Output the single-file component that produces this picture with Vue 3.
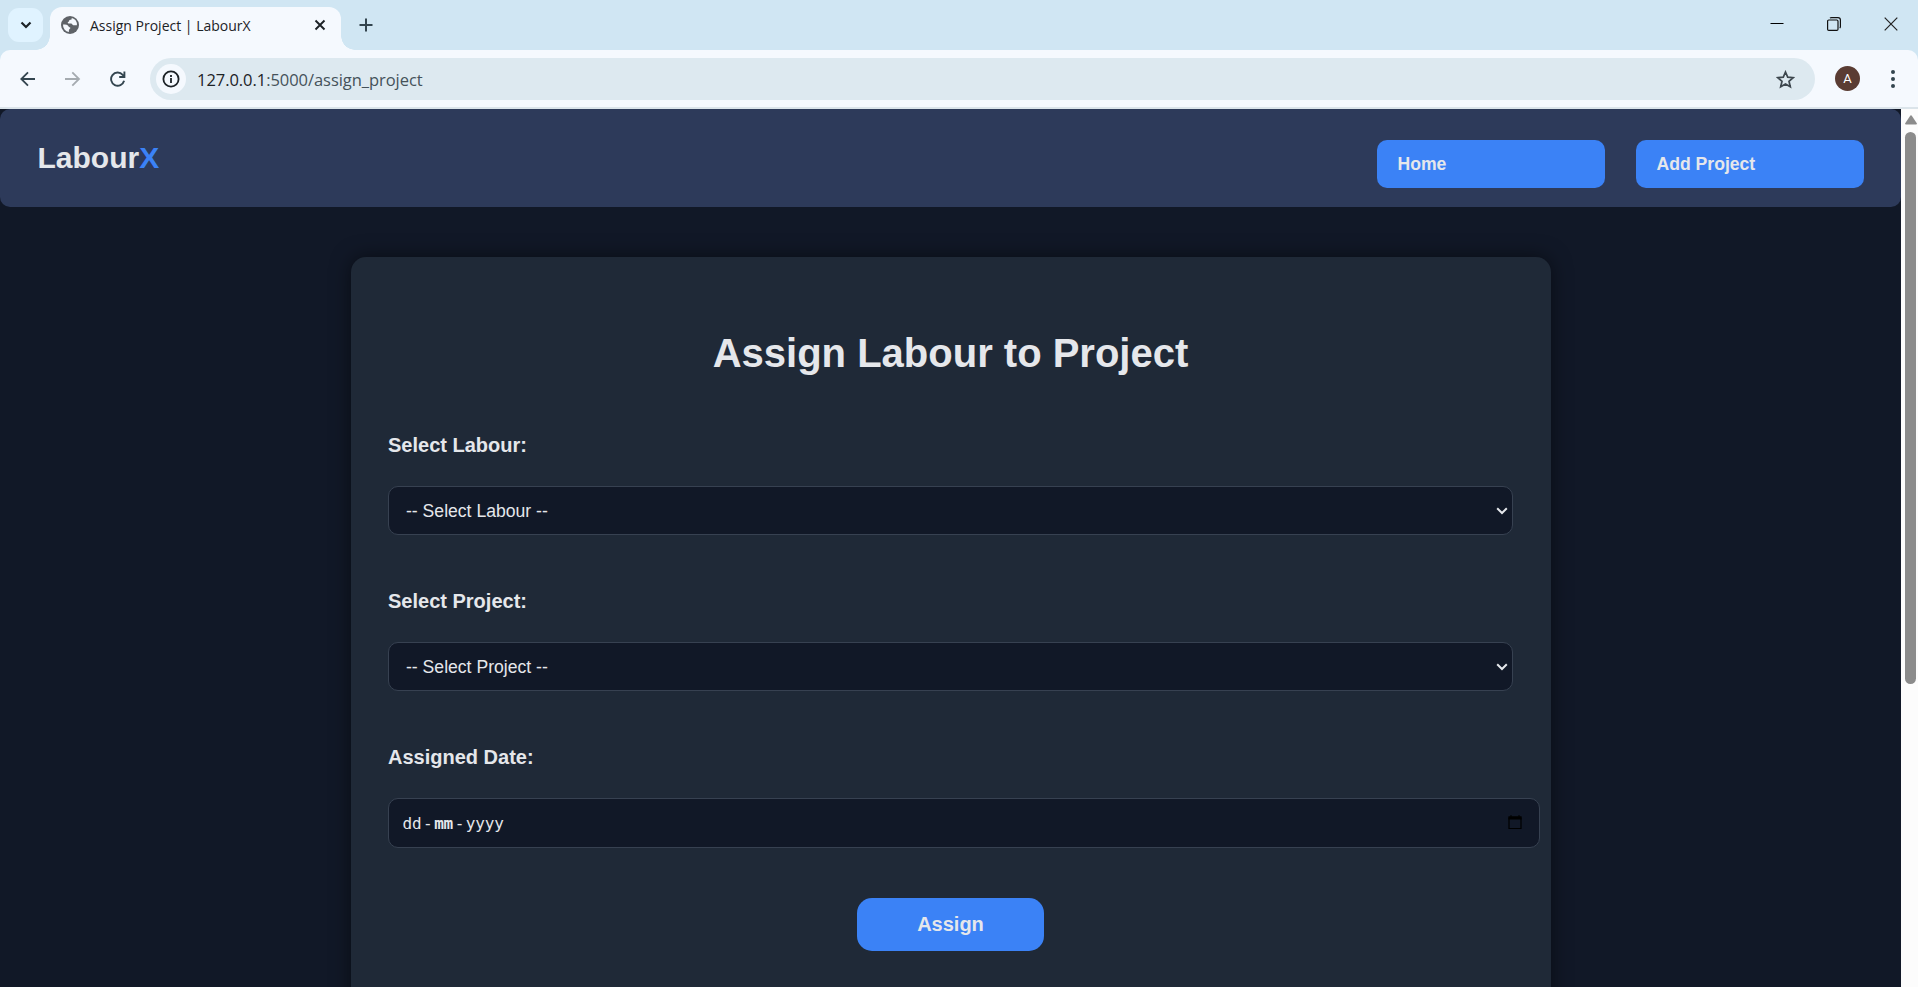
<script setup>
import { ref } from 'vue'

const links = ['Home', 'Add Project']
const selects = [
  { id: 'labour', label: 'Select Labour:', placeholder: '-- Select Labour --' },
  { id: 'project', label: 'Select Project:', placeholder: '-- Select Project --' },
]
const values = ref({ labour: '', project: '' })
</script>

<template>
  <div class="window">
    <div class="tabstrip">
      <button class="tab-search" aria-label="Search tabs">
        <svg width="12" height="8" viewBox="0 0 12 8"><path d="M1.500 1.500 6 6l4.500-4.500" fill="none" stroke="#1c2226" stroke-width="2.200" /></svg>
      </button>
      <div class="tab">
        <svg class="globe" width="18" height="18" viewBox="0 0 18 18">
          <circle cx="9" cy="9" r="9" fill="#5f6368" />
          <path d="M10.800 2.100c-.3 1 .1 1.500-.9 1.700-.9.2-1.800.1-1.800 1.100 0 .9-1.400.7-1.400 1.700 0 .7.5 1 1.400 1h2c1.200 0 1 1.600 2.200 1.600h3.600a7 7 0 0 0-5.100-7.100zM2 8.600c2.500 0 5.200.2 5.600 1.900.2.900 1.800.4 1.800 1.600 0 1-1.500 1-1.500 2.100v1.800A7 7 0 0 1 2 8.600z" fill="#f5f9fe" />
        </svg>
        <span class="tab-title">Assign Project | LabourX</span>
        <svg class="tab-close" width="12" height="12" viewBox="0 0 12 12"><path d="M1.500 1.500l9 9M10.500 1.500l-9 9" stroke="#1c2226" stroke-width="1.900" /></svg>
      </div>
      <svg class="new-tab" width="14" height="14" viewBox="0 0 14 14"><path d="M7 .5v13M.5 7h13" stroke="#33454f" stroke-width="2" /></svg>
      <div class="controls">
        <svg width="14" height="14" viewBox="0 0 14 14"><path d="M.5 6.500h13" stroke="#000" /></svg>
        <svg width="14" height="14" viewBox="0 0 14 14" fill="none" stroke="#111"><rect x=".6" y="3" width="10.400" height="10.400" rx="1.200" stroke-width="1.200" /><path d="M3 1.100Q3.500.6 4.500.6h6.500a2.400 2.400 0 0 1 2.400 2.400v6.500q0 1-.7 1.600" stroke-width="1.200" /></svg>
        <svg width="14" height="14" viewBox="0 0 14 14"><path d="M.7.7l12.600 12.600M13.300.7.7 13.300" stroke="#222" stroke-width="1.200" /></svg>
      </div>
    </div>

    <div class="toolbar">
      <svg class="nav-icon back" width="16" height="16" viewBox="0 0 16 16"><path d="M15 8H1.800M8 1.300 1.300 8 8 14.700" fill="none" stroke="#33454f" stroke-width="1.800" /></svg>
      <svg class="nav-icon forward" width="16" height="16" viewBox="0 0 16 16"><path d="M0 8H13.500M7.300 1.300 14 8l-6.700 6.700" fill="none" stroke="#a5abb0" stroke-width="1.800" /></svg>
      <svg class="nav-icon reload" width="16" height="16" viewBox="0 0 16 16"><path d="M14.100 9.800A6.600 6.600 0 1 1 12.700 3.800L14.300 5.500M14.400.5v5.500H9.200" fill="none" stroke="#33454f" stroke-width="1.900" /></svg>
      <div class="address">
        <span class="site-info">
          <svg width="18" height="18" viewBox="0 0 18 18"><circle cx="9" cy="9" r="7.600" fill="none" stroke="#1c2226" stroke-width="1.800" /><path d="M9 8v5M9 5v1.900" stroke="#1c2226" stroke-width="1.800" /></svg>
        </span>
        <span class="url"><span class="host">127.0.0.1</span>:5000/assign_project</span>
        <svg class="star" width="19" height="19" viewBox="0 0 19 19"><path d="M9.500 2l2.200 5.100 5.500.5-4.200 3.700 1.300 5.500-4.800-2.900-4.800 2.900L6 11.300 1.800 7.600l5.500-.5z" fill="none" stroke="#3d474e" stroke-width="1.700" /></svg>
      </div>
      <span class="avatar">A</span>
      <svg class="menu" width="4" height="18" viewBox="0 0 4 18" fill="#33454f"><circle cx="2" cy="2" r="2" /><circle cx="2" cy="9" r="2" /><circle cx="2" cy="16" r="2" /></svg>
    </div>

    <div class="viewport">
      <div class="page">
        <header class="header">
          <div class="logo">Labour<span>X</span></div>
          <nav class="links">
            <a v-for="link in links" :key="link">{{ link }}</a>
          </nav>
        </header>
        <main class="card">
          <h1>Assign Labour to Project</h1>
          <form @submit.prevent>
            <div v-for="field in selects" :key="field.id" class="field">
              <label :for="field.id">{{ field.label }}</label>
              <div class="select-wrap">
                <select :id="field.id" v-model="values[field.id]">
                  <option value="">{{ field.placeholder }}</option>
                </select>
                <svg class="chevron" width="12" height="8" viewBox="0 0 12 8"><path d="M1.200 1.300 6 6l4.800-4.700" fill="none" stroke="#e5e7eb" stroke-width="2" /></svg>
              </div>
            </div>
            <div class="field">
              <label>Assigned Date:</label>
              <div class="date">
                <span class="date-text"><span>dd</span><span>-</span><span class="month">mm</span><span>-</span><span>yyyy</span></span>
                <svg width="14" height="15" viewBox="0 0 14 15"><path d="M1 3h12v10.500H1z" fill="none" stroke="#000" stroke-width="1.200" /><path d="M.4 1.200h13.200V4.500H.4zM2.500 0h1v2h-1zM10.500 0h1v2h-1z" /></svg>
              </div>
            </div>
            <button class="submit" type="submit">Assign</button>
          </form>
        </main>
      </div>
      <div class="scrollbar">
        <svg width="12" height="10" viewBox="0 0 12 10"><path d="M5.200.8q.8-.9 1.600 0l5 7.400q.4 1.300-.8 1.300H1q-1.200 0-.8-1.300z" fill="#8b8b8b" /></svg>
        <div class="thumb"></div>
      </div>
    </div>
  </div>
</template>

<style>
body { margin: 0; overflow: hidden; }
</style>

<style scoped>
* { box-sizing: border-box; }
svg { display: block; flex: none; }
.window { width: 1918px; height: 987px; overflow: hidden; display: flex; flex-direction: column; background: #d0e6f3; font-family: "Liberation Sans", Arial, sans-serif; }

.tabstrip { height: 50px; flex: none; display: flex; background: #d0e6f3; }
.tab-search { width: 35px; height: 34px; margin: 8px 7px 0 8px; padding: 0; border: 0; border-radius: 11px; background: #e0f3ff; display: grid; place-items: center; }
.tab { position: relative; width: 290.500px; height: 43px; margin-top: 7px; padding: 0 15px 7px 11px; display: flex; align-items: center; border-radius: 12px 12px 0 0; background: #f5f9fe; }
.tab::before, .tab::after { content: ""; position: absolute; bottom: 0; width: 14px; height: 14px; }
.tab::before { left: -14px; background: radial-gradient(circle at 0 0, transparent 13.500px, #f5f9fe 14px); }
.tab::after { right: -14px; background: radial-gradient(circle at 100% 0, transparent 13.500px, #f5f9fe 14px); }
.tab-title { margin-left: 11px; padding-top: 1px; flex: 1; font: 14px/20px "Open Sans", "Noto Sans", sans-serif; letter-spacing: 0; color: #1c2226; white-space: nowrap; }
.new-tab { margin: 18px 0 0 18.500px; }
.controls { margin: 17px 20px 0 auto; display: flex; gap: 43px; }

.toolbar { height: 59px; flex: none; padding: 8px 23.500px 7px 20px; display: flex; align-items: flex-start; border-bottom: 2px solid #dbe4ea; background: #f5f9fe; border-radius: 10px 10px 0 0; }
.nav-icon { margin-top: 12.500px; }
.forward { margin-left: 29px; }
.reload { margin-left: 28.500px; }
.address { width: 1665px; height: 42px; margin-left: 24.500px; padding: 0 20px 0 6px; display: flex; align-items: center; border-radius: 21px; background: #dde9f0; }
.site-info { width: 30px; height: 30px; border-radius: 50%; background: #f5f9fe; display: grid; place-items: center; }
.url { margin-left: 11px; padding-top: 2px; flex: 1; font: 16.500px/24px "Open Sans", "Noto Sans", sans-serif; color: #45525a; letter-spacing: -.05px; }
.host { color: #1c2226; }
.avatar { width: 25px; height: 25px; margin: 8px 0 0 20px; border-radius: 50%; background: #5a3c33; color: #fff; font: 13px/26px Roboto, sans-serif; text-align: center; }
.menu { margin: 12px 0 0 auto; }

.viewport { flex: 1; min-height: 0; display: flex; background: #111827; }
.page { width: 1901px; overflow: hidden; background: #111827; color: #e5e7eb; }
.header { height: 98px; padding: 31px 37px 0 37.500px; display: flex; justify-content: space-between; border-radius: 10px; background: #2d3a5a; }
.logo { padding-top: 1px; font-size: 30px; font-weight: 700; line-height: 34px; }
.logo span { color: #3b82f6; }
.links { display: flex; gap: 31px; }
.links a { width: 228px; height: 48px; padding-left: 20.500px; border-radius: 10px; background: #3b82f6; font-size: 17.600px; font-weight: 700; line-height: 48px; }
.card { width: 1200px; height: 900px; margin: 50px auto 0; padding: 73px 37px 0; border-radius: 15px; background: #1f2937; box-shadow: 0 0 20px rgba(0, 0, 0, .5); }
h1 { margin: 0 0 58px; font-size: 40px; line-height: 46px; text-align: center; }
.field { height: 156px; }
label { display: block; margin-bottom: 29px; padding-left: .5px; font-size: 20px; font-weight: 700; line-height: 23px; }
.select-wrap { position: relative; width: 1125px; }
select { display: block; width: 100%; height: 49px; padding: 0 0 0 17.500px; appearance: none; border: 1px solid #374151; border-radius: 10px; background: #111827; color: #e5e7eb; font: 17.600px "Liberation Sans", Arial, sans-serif; }
.chevron { position: absolute; right: 5px; top: 21px; pointer-events: none; }
.date { width: 1152px; height: 50px; padding: 0 17px 0 14px; display: flex; align-items: center; justify-content: space-between; border: 1px solid #374151; border-radius: 10px; background: #111827; font: 16px/20px "DejaVu Sans Mono", monospace; }
.date svg { margin-bottom: 2px; }
.date-text { display: flex; gap: 1.600px; padding-top: 1px; letter-spacing: -.15px; }
.month { font-weight: 700; }
.submit { display: block; width: 187px; height: 53px; margin: -4px auto 0; padding: 0; border: 0; border-radius: 15px; background: #3b82f6; color: #e5e7eb; font: 700 20px/53px "Liberation Sans", Arial, sans-serif; }
.scrollbar { width: 17px; padding: 6px 0 0 4px; background: #fcfcfc; }
.thumb { width: 11px; height: 552px; margin-top: 7px; border-radius: 6px; background: #8b8b8b; }
</style>
